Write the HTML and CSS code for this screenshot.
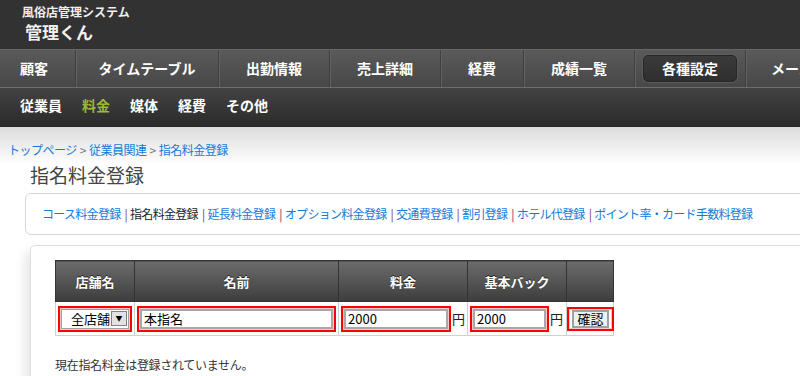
FILE: index.html
```html
<!DOCTYPE html>
<html lang="ja">
<head>
<meta charset="utf-8">
<title>指名料金登録 | 管理くん</title>
<link rel="stylesheet" href="styles.css">
</head>
<body>
<div id="page">
	<div class="site-header">
		<div class="site-sub">風俗店管理システム</div>
		<div class="site-name">管理くん</div>
	</div>

	<ul class="main-nav">
		<li class="nav-first"><a href="#">顧客</a></li>
		<li class="nav-wide"><a href="#">タイムテーブル</a></li>
		<li><a href="#">出勤情報</a></li>
		<li><a href="#">売上詳細</a></li>
		<li class="nav-short"><a href="#">経費</a></li>
		<li><a href="#">成績一覧</a></li>
		<li class="active"><a href="#">各種設定</a></li>
		<li class="nav-last"><a href="#">メール</a></li>
	</ul>

	<ul class="sub-nav">
		<li><a href="#">従業員</a></li>
		<li class="current"><a href="#">料金</a></li>
		<li><a href="#">媒体</a></li>
		<li><a href="#">経費</a></li>
		<li><a href="#">その他</a></li>
	</ul>

	<div id="body-content">
		<div class="breadcrumb">
			<a href="#">トップページ</a><span class="gt">&gt;</span><a href="#">従業員関連</a><span class="gt">&gt;</span><a href="#">指名料金登録</a>
		</div>
		<h1 class="page-title">指名料金登録</h1>

		<div class="tab-box">
			<a href="#">コース料金登録</a><span class="sep">|</span><span class="here">指名料金登録</span><span class="sep">|</span><a href="#">延長料金登録</a><span class="sep">|</span><a href="#">オプション料金登録</a><span class="sep">|</span><a href="#">交通費登録</a><span class="sep">|</span><a href="#">割引登録</a><span class="sep">|</span><a href="#">ホテル代登録</a><span class="sep">|</span><a href="#">ポイント率・カード手数料登録</a>
		</div>

		<div class="form-box">
			<form name="entryForm">
			<table class="entry-table">
				<tr>
					<th class="col-shop">店舗名</th>
					<th class="col-name">名前</th>
					<th class="col-price">料金</th>
					<th class="col-back">基本バック</th>
					<th class="col-btn"></th>
				</tr>
				<tr>
					<td>
						<span class="req">
							<span class="shop-select"><span class="shop-value">全店舗</span><span class="shop-arrow">▼</span></span>
						</span>
					</td>
					<td><span class="req"><input type="text" class="in-name" value="本指名"></span></td>
					<td><span class="req"><input type="text" class="in-price" value="2000"></span><span class="yen">円</span></td>
					<td><span class="req"><input type="text" class="in-back" value="2000"></span><span class="yen">円</span></td>
					<td class="cell-btn"><span class="req"><button type="button">確認</button></span></td>
				</tr>
			</table>
			</form>
			<p class="notice">現在指名料金は登録されていません。</p>
		</div>
	</div>
</div>
</body>
</html>
```

FILE: styles.css
```css
html, body {
    margin: 0;
    padding: 0;
    overflow: hidden;
    background: #fff;
    font-family: "Noto Sans CJK JP", "DejaVu Sans", sans-serif;
}

div#page {
    width: 1000px;
}

a {
    text-decoration: none;
}

/* header */
div.site-header {
    height: 49px;
    box-sizing: border-box;
    padding: 5px 0 0 22px;
    background-color: #323232;
    color: #f0f0f0;
}

div.site-sub {
    font-size: 12px;
    line-height: 14px;
    font-weight: bold;
}

div.site-name {
    font-size: 17px;
    line-height: 20px;
    margin-top: 3px;
    padding-left: 3px;
    font-weight: bold;
}

/* main nav */
ul.main-nav {
    display: flex;
    margin: 0;
    padding: 0;
    list-style: none;
    height: 37px;
    border-top: 1px solid #666;
    border-bottom: 1px solid #6e6e6e;
    background: linear-gradient(#5a5a5a, #474747);
}

ul.main-nav li {
    width: 110px;
    text-align: center;
    border-right: 1px solid #3e3e3e;
    box-shadow: 1px 0 0 #626262;
}

ul.main-nav li a {
    display: block;
    color: #fff;
    font-size: 14px;
    font-weight: bold;
    line-height: 37px;
    white-space: nowrap;
}

ul.main-nav li.nav-first {
    width: 75px;
    text-align: left;
}

ul.main-nav li.nav-first a {
    padding-left: 20px;
}

ul.main-nav li.nav-wide {
    width: 142px;
}

ul.main-nav li.nav-short {
    width: 82px;
}

ul.main-nav li.nav-last {
    width: 54px;
    text-align: left;
    border-right: none;
    box-shadow: none;
}

ul.main-nav li.nav-last a {
    padding-left: 25px;
}

ul.main-nav li.active a {
    margin: 5px 8px 5px 8px;
    line-height: 25px;
    background: linear-gradient(#3a3a3a, #2f2f2f);
    border: 1px solid #262626;
    border-radius: 5px;
    box-shadow: 0 0 0 1px #5c5c5c;
}

/* sub nav */
ul.sub-nav {
    display: flex;
    gap: 20px;
    margin: 0;
    padding: 0 0 0 20px;
    list-style: none;
    height: 39px;
    background: linear-gradient(#434343, #2a2a2a);
}

ul.sub-nav li a {
    color: #fff;
    font-size: 14px;
    font-weight: bold;
    line-height: 35px;
}

ul.sub-nav li.current a {
    color: #9bb83a;
}

/* content */
div#body-content {
    background: linear-gradient(#dcdcdc, #ffffff 38px);
    padding-top: 15px;
}

div.breadcrumb {
    padding-left: 8px;
    font-size: 12px;
    line-height: 16px;
    letter-spacing: -0.5px;
    color: #777;
}

div.breadcrumb a {
    color: #1679d8;
}

div.breadcrumb span.gt {
    margin: 0 3px;
}

h1.page-title {
    margin: 5px 0 0 0;
    padding-left: 30px;
    font-size: 19px;
    line-height: 23px;
    font-weight: normal;
    color: #454545;
}

div.tab-box {
    margin: 7px 0 0 25px;
    height: 40px;
    padding-left: 16px;
    border: 1px solid #d6d6d6;
    border-radius: 6px;
    font-size: 12px;
    line-height: 40px;
    letter-spacing: -0.7px;
    color: #222;
    white-space: nowrap;
}

div.tab-box a {
    color: #1679d8;
}

div.tab-box span.sep {
    margin: 0 3px 0 4px;
    color: #7a2f6e;
}

div.form-box {
    margin: 10px 0 0 30px;
    padding: 14px 0 0 24px;
    height: 200px;
    border: 1px solid #dedede;
    border-radius: 5px 0 0 0;
    box-shadow: -5px 6px 12px rgba(0, 0, 0, 0.10);
}

/* entry table */
table.entry-table {
    border-collapse: collapse;
    table-layout: fixed;
    width: 558px;
}

table.entry-table th {
    height: 40px;
    padding: 0;
    border: 1px solid #333;
    background: linear-gradient(#6c6c6c, #3d3d3d);
    color: #fff;
    font-size: 13px;
    font-weight: bold;
    text-shadow: 0 -1px 0 #222;
}

th.col-shop { width: 78px; }
th.col-name { width: 203px; }
th.col-price { width: 128px; }
th.col-back { width: 98px; }
th.col-btn { width: 46px; }

table.entry-table td {
    height: 33px;
    padding: 0 0 0 2px;
    border: 1px solid #d0d0d0;
    white-space: nowrap;
    font-size: 13px;
    color: #222;
}

table.entry-table td.cell-btn {
    padding: 0;
}

span.req {
    display: inline-block;
    vertical-align: middle;
    border: 2px solid #f00;
    padding: 1px;
    box-shadow: inset 0 0 0 1px #f6c8c8;
}

span.req input {
    display: block;
    box-sizing: border-box;
    height: 20px;
    margin: 0;
    padding: 0 2px;
    border: 2px solid #a8a8a8;
    font-family: "Noto Sans CJK JP", sans-serif;
    font-size: 13px;
    color: #000;
}

input.in-name { width: 193px; }
input.in-price { width: 104px; }
input.in-back { width: 73px; }

span.yen {
    vertical-align: middle;
    margin-left: 1px;
}

span.shop-select {
    display: flex;
    align-items: center;
    justify-content: flex-end;
    box-sizing: border-box;
    width: 68px;
    height: 20px;
    border: 1px solid #a0a0a0;
    padding-right: 1px;
    font-size: 13px;
    color: #000;
}

span.shop-arrow {
    display: inline-block;
    width: 14px;
    height: 13px;
    margin-left: 1px;
    border: 1px solid #808080;
    background: #e2e2e2;
    font-size: 7px;
    line-height: 13px;
    text-align: center;
}

span.req button {
    display: block;
    width: 37px;
    height: 18px;
    margin: 0 2px;
    padding: 0;
    border: 2px solid #a0a0a0;
    background: #f0f0f0;
    font-family: "Noto Sans CJK JP", sans-serif;
    font-size: 13px;
    line-height: 14px;
    color: #000;
}

p.notice {
    margin: 21px 0 0 0;
    font-size: 12px;
    line-height: 16px;
    letter-spacing: -0.3px;
    color: #333;
}
```
